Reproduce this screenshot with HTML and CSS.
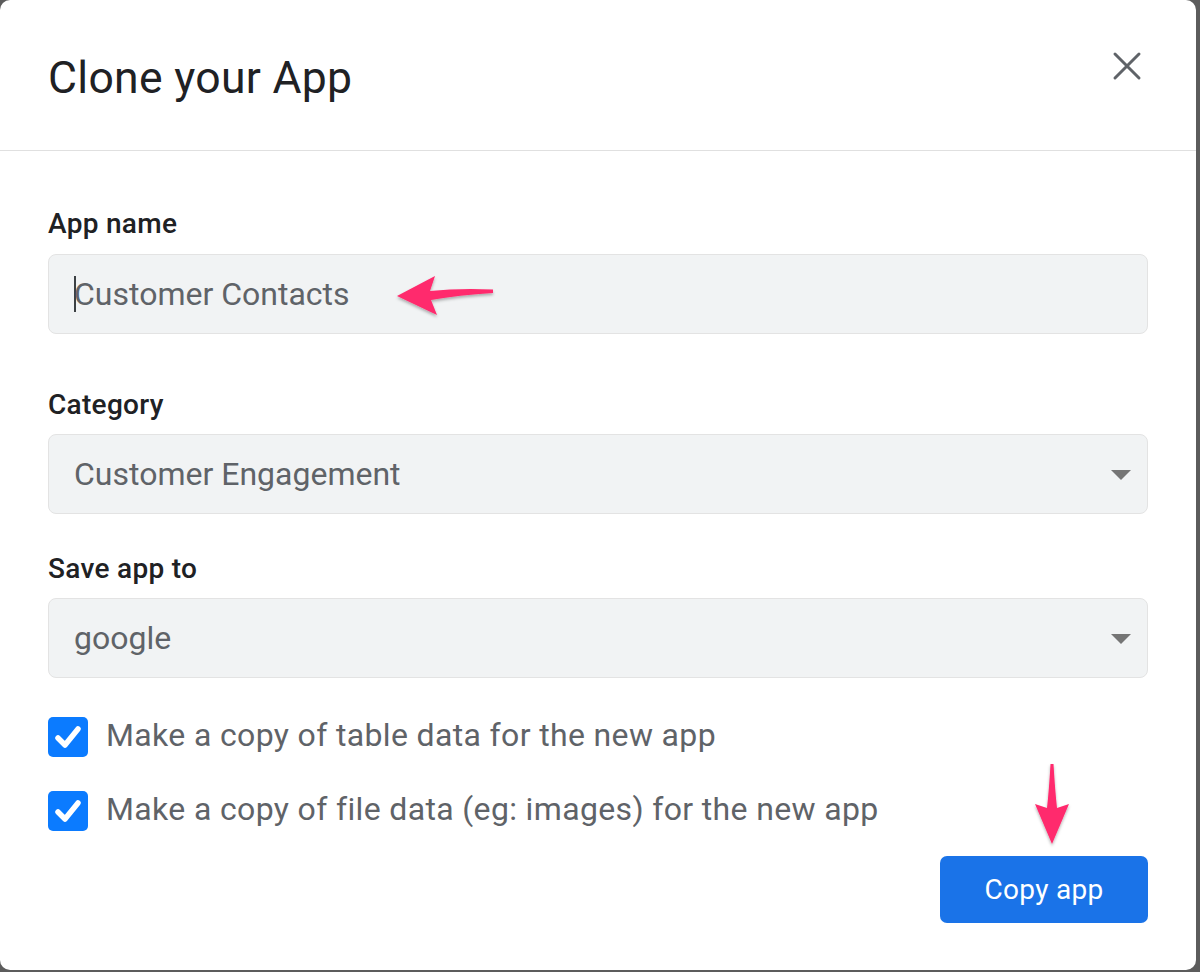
FILE: index.html
```html
<!DOCTYPE html>
<html>
<head>
<meta charset="utf-8">
<link rel="stylesheet" href="styles.css">
</head>
<body>
<div class="dialog">
  <div class="header">
    <h1 class="title">Clone your App</h1>
    <button class="close" aria-label="Close">
      <svg width="30" height="30" viewBox="0 0 30 30"><path d="M3 3 L27 27 M27 3 L3 27" stroke="#5f6368" stroke-width="3" stroke-linecap="round" fill="none"/></svg>
    </button>
  </div>
  <div class="body">
    <div class="field first">
      <div class="label">App name</div>
      <div class="input"><span class="caret"></span>Customer Contacts
        <svg class="arrow-left" width="110" height="50" viewBox="0 0 110 50">
          <defs><filter id="sh" x="-20%" y="-30%" width="140%" height="170%"><feDropShadow dx="0" dy="2" stdDeviation="1.5" flood-color="#000" flood-opacity="0.3"/></filter></defs>
          <path filter="url(#sh)" fill="#ff2a6d" d="M8 25 L46 5 L41 20 Q70 17 104 18.5 L104 22 Q70 24 42 29 L48 44 Z"/>
        </svg>
      </div>
    </div>
    <div class="field second">
      <div class="label">Category</div>
      <div class="input select">Customer Engagement<span class="tri"></span></div>
    </div>
    <div class="field third">
      <div class="label">Save app to</div>
      <div class="input select">google<span class="tri"></span></div>
    </div>
    <div class="checks">
      <div class="check"><span class="box"><svg width="40" height="40" viewBox="0 0 40 40"><path d="M10 21 L17 28 L30 12" stroke="#fff" stroke-width="5.5" fill="none" stroke-linecap="round" stroke-linejoin="round"/></svg></span><span class="ctext">Make a copy of table data for the new app</span></div>
      <div class="check"><span class="box"><svg width="40" height="40" viewBox="0 0 40 40"><path d="M10 21 L17 28 L30 12" stroke="#fff" stroke-width="5.5" fill="none" stroke-linecap="round" stroke-linejoin="round"/></svg></span><span class="ctext">Make a copy of file data (eg: images) for the new app</span></div>
    </div>
    <div class="actions">
      <button class="primary">Copy app</button>
      <svg class="arrow-down" width="50" height="96" viewBox="0 0 50 96">
        <defs><filter id="sh2" x="-40%" y="-10%" width="180%" height="130%"><feDropShadow dx="0" dy="2" stdDeviation="1.5" flood-color="#000" flood-opacity="0.3"/></filter></defs>
        <path filter="url(#sh2)" fill="#ff2a6d" d="M23.5 4 L26.5 4 Q28 30 30 48 L42 44 L25 84 L8 44 L20 48 Q22 30 23.5 4 Z"/>
      </svg>
    </div>
  </div>
</div>
</body>
</html>
```
FILE: styles.css
```css
html, body {
  margin: 0;
  padding: 0;
}
body {
  width: 1200px;
  height: 972px;
  background: #5c5c5c;
  overflow: hidden;
  font-family: Roboto, "Noto Sans", sans-serif;
}
.dialog {
  width: 1196px;
  height: 970px;
  background: #fff;
  border-radius: 10px;
  overflow: hidden;
}
.header {
  height: 150px;
  border-bottom: 1px solid #e0e0e0;
  display: flex;
  align-items: center;
  justify-content: space-between;
  padding: 0 49px 0 48px;
  box-sizing: content-box;
}
.title {
  margin: 6px 0 0 0;
  font-weight: 400;
  font-size: 44.5px;
  color: #202124;
  letter-spacing: 0.3px;
}
.close {
  width: 40px;
  height: 40px;
  border: none;
  background: none;
  padding: 0;
  margin-top: -19px;
  display: flex;
  align-items: center;
  justify-content: center;
}
.body {
  padding: 55px 48px 0 48px;
}
.label {
  font-size: 28px;
  line-height: 36px;
  font-weight: 500;
  color: #202124;
  margin-bottom: 12px;
  letter-spacing: 0.3px;
}
.field.second { margin-top: 53px; }
.field.third { margin-top: 37px; }
.second .label, .third .label { margin-bottom: 11px; }
.input {
  position: relative;
  height: 78px;
  background: #f1f3f4;
  border: 1px solid #e3e3e3;
  border-radius: 8px;
  box-sizing: content-box;
  display: flex;
  align-items: center;
  padding: 0 25px;
  font-size: 32px;
  color: #5f6368;
}
.caret {
  display: inline-block;
  width: 2px;
  height: 36px;
  background: #3c4043;
  margin-right: -2px;
}
.tri {
  position: absolute;
  right: 16px;
  top: 35px;
  width: 0;
  height: 0;
  border-left: 10px solid transparent;
  border-right: 10px solid transparent;
  border-top: 10px solid #757575;
}
.arrow-left {
  position: absolute;
  left: 340px;
  top: 16px;
}
.checks {
  margin-top: 39px;
  display: flex;
  flex-direction: column;
  gap: 34px;
}
.check {
  display: flex;
  align-items: center;
  height: 40px;
}
.box {
  width: 40px;
  height: 40px;
  background: #0b7bff;
  border-radius: 5px;
  display: block;
  flex: none;
}
.box svg { display: block; }
.ctext {
  margin-left: 18px;
  font-size: 32px;
  line-height: 40px;
  color: #5f6368;
  letter-spacing: 0.35px;
  position: relative;
  top: -2px;
}
.actions {
  position: relative;
  margin-top: 25px;
  display: flex;
  justify-content: flex-end;
}
.primary {
  width: 208px;
  height: 67px;
  border: none;
  border-radius: 7px;
  background: #1a73e8;
  color: #fff;
  font-family: Roboto, "Noto Sans", sans-serif;
  font-size: 28px;
  letter-spacing: 0.3px;
  padding: 0;
}
.arrow-down {
  position: absolute;
  left: 979px;
  top: -96px;
}
```
